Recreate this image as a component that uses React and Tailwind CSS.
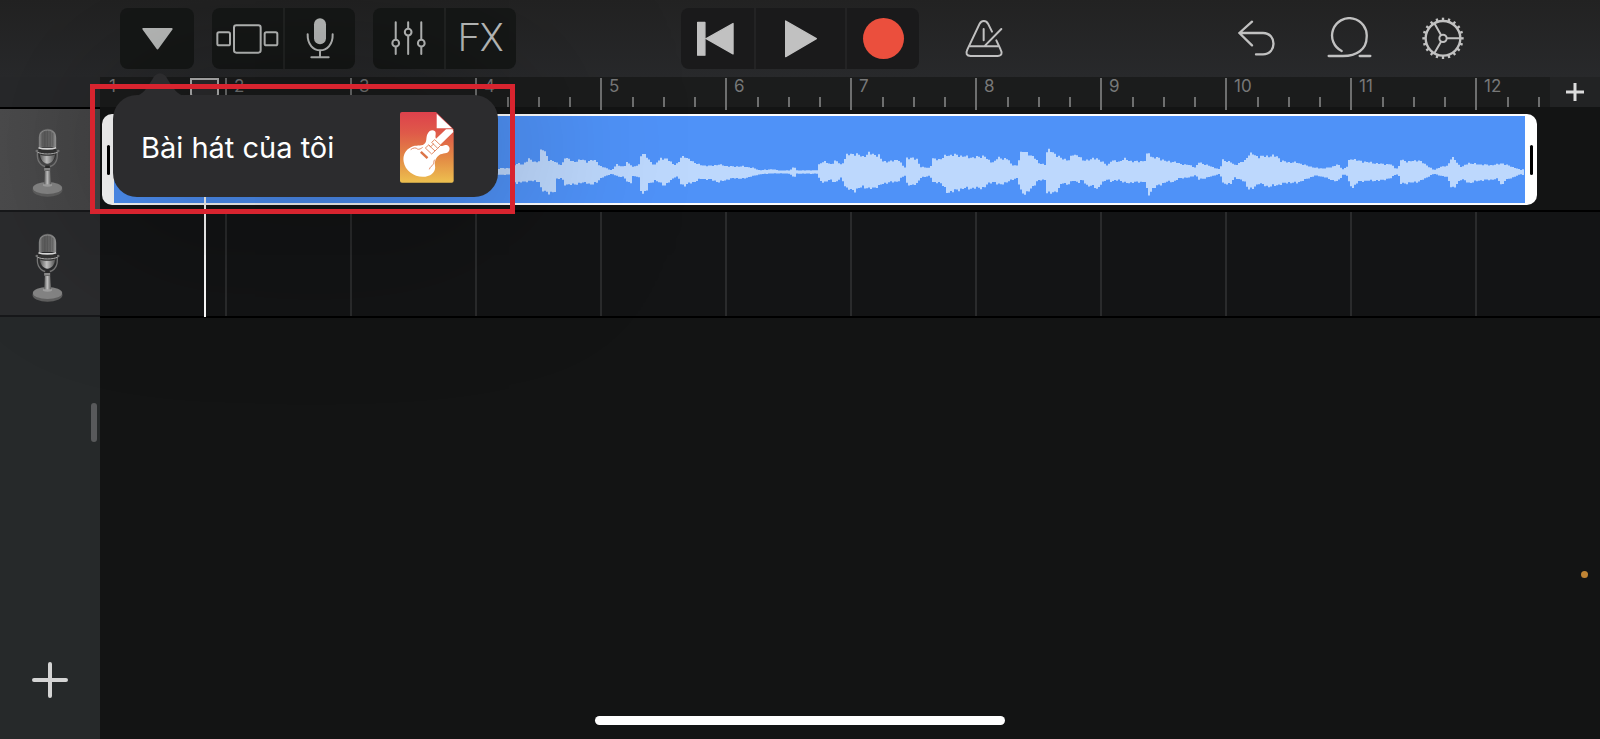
import React from "react";

const BARS = [1, 2, 3, 4, 5, 6, 7, 8, 9, 10, 11, 12];

/* Loudness envelope of the recording: [position, above, below] triples. */
const SEGMENTS = [
  {
    start: 398,
    unit: 2.958,
    points: [
      [0, 12, 8], [30, 10, 8], [45, 25, 35], [65, 22, 28], [82, 38, 28], [100, 30, 25], [113, 32, 30], [118, 60, 50],
      [124, 68, 55], [132, 60, 55], [140, 35, 62], [150, 32, 65], [160, 32, 55], [165, 28, 20], [182, 17, 18],
      [186, 44, 38], [200, 40, 36], [215, 28, 38], [235, 38, 32], [255, 30, 32], [268, 36, 38], [285, 30, 30],
      [292, 18, 20], [310, 12, 12], [328, 5, 5], [342, 22, 12], [365, 15, 15], [372, 28, 30], [385, 22, 30],
      [390, 15, 12], [408, 20, 15], [413, 50, 50], [420, 55, 62], [430, 46, 60], [437, 36, 35], [455, 20, 25],
      [472, 40, 32], [485, 40, 40], [500, 32, 28], [512, 22, 15], [525, 25, 15], [531, 42, 35], [543, 48, 40],
      [553, 38, 35], [570, 30, 30], [590, 20, 20], [620, 18, 22], [645, 22, 30], [670, 17, 22], [690, 16, 18],
      [715, 17, 20], [745, 12, 12], [765, 5, 7], [800, 8, 4], [830, 4, 4], [855, 5, 5], [868, 17, 18], [873, 5, 5],
      [935, 5, 5], [942, 25, 22], [955, 32, 32], [975, 22, 22], [990, 34, 32], [1008, 20, 15], [1015, 35, 35],
      [1022, 50, 50], [1048, 54, 55], [1070, 45, 42], [1088, 55, 50], [1120, 48, 42], [1127, 32, 35], [1150, 30, 30],
      [1175, 38, 28], [1187, 20, 15], [1197, 12, 10], [1200, 42, 32], [1215, 40, 42], [1232, 38, 32], [1240, 15, 18],
      [1270, 12, 10], [1277, 38, 32], [1300, 38, 30], [1320, 50, 60], [1345, 50, 55], [1370, 46, 48], [1400, 42, 48],
      [1430, 48, 46], [1440, 35, 35], [1458, 28, 28], [1470, 42, 38], [1500, 38, 30], [1510, 22, 22], [1530, 18, 18],
      [1534, 50, 50], [1536, 55, 55],
    ],
  },
  {
    start: 918,
    unit: 2.904,
    points: [
      [0, 55, 55], [10, 65, 62], [20, 50, 60], [45, 42, 30], [48, 25, 25], [70, 22, 22], [76, 64, 62], [90, 58, 62],
      [110, 45, 50], [118, 38, 32], [140, 35, 35], [150, 50, 25], [170, 48, 30], [178, 32, 22], [190, 35, 38],
      [212, 38, 42], [222, 40, 50], [232, 32, 35], [252, 18, 20], [262, 33, 28], [285, 30, 22], [300, 38, 32],
      [325, 30, 30], [360, 32, 28], [370, 60, 68], [380, 42, 50], [400, 40, 38], [425, 30, 28], [445, 30, 28],
      [460, 24, 18], [490, 20, 16], [508, 12, 8], [515, 28, 22], [535, 22, 18], [575, 8, 6], [580, 10, 6],
      [583, 36, 32], [610, 28, 35], [620, 20, 15], [650, 32, 28], [660, 50, 48], [672, 52, 50], [690, 44, 32],
      [715, 46, 42], [745, 46, 38], [755, 32, 35], [780, 28, 30], [800, 28, 32], [825, 20, 22], [855, 12, 10],
      [880, 10, 14], [900, 14, 22], [920, 22, 28], [935, 8, 8], [946, 14, 8], [955, 38, 38], [965, 38, 44],
      [980, 32, 28], [1010, 28, 25], [1040, 24, 25], [1075, 22, 18], [1085, 12, 8], [1097, 10, 6], [1100, 36, 34],
      [1125, 30, 32], [1155, 34, 28], [1175, 22, 18], [1200, 5, 5], [1215, 14, 10], [1240, 18, 15], [1247, 38, 40],
      [1257, 40, 50], [1270, 22, 28], [1280, 14, 20], [1300, 26, 32], [1330, 22, 25], [1365, 20, 22], [1385, 22, 20],
      [1397, 26, 40], [1405, 22, 25], [1430, 14, 15], [1455, 5, 5], [1463, 14, 14],
    ],
  },
];

const ENVELOPE = SEGMENTS.flatMap(({ start, unit, points }) =>
  points.map(([x, up, down]) => [start + x / unit, up / unit, down / unit])
).sort((a, b) => a[0] - b[0]);

function wavePath(middle) {
  const top = [];
  const bottom = [];
  let i = 0;
  const last = ENVELOPE[ENVELOPE.length - 1][0];
  for (let x = 398, n = 0; x < last; x += 2, n += 1) {
    while (i < ENVELOPE.length - 2 && ENVELOPE[i + 1][0] <= x) i += 1;
    const a = ENVELOPE[i];
    const b = ENVELOPE[i + 1];
    const t = (x - a[0]) / (b[0] - a[0] || 1);
    const up = a[1] + (b[1] - a[1]) * t;
    const down = a[2] + (b[2] - a[2]) * t;
    const noise = Math.sin(n * 2.3) * 0.07 + Math.sin(n * 5.1) * 0.04;
    top.push([x, middle - up * (1 + noise)]);
    bottom.push([x, middle + down * (1 - noise)]);
  }
  const forward = top.map(([x, y]) => `L${x} ${y.toFixed(1)}H${x + 2}`).join("");
  const back = bottom.reverse().map(([x, y]) => `L${x + 2} ${y.toFixed(1)}H${x}`).join("");
  return `M340 ${middle - 3}H398${forward}${back}L340 ${middle + 3}Z`;
}

function StudioMic({ id }) {
  return (
    <svg viewBox="95 85 95 207" className="h-[69px] w-8" aria-hidden="true">
      <defs>
        <linearGradient id={`${id}-head`}>
          <stop offset="0" stopColor="#8b8b8b" />
          <stop offset=".3" stopColor="#5b5b5b" />
          <stop offset=".7" stopColor="#6c6c6c" />
          <stop offset="1" stopColor="#9a9a9a" />
        </linearGradient>
        <linearGradient id={`${id}-metal`}>
          <stop offset="0" stopColor="#5a5a5a" />
          <stop offset=".45" stopColor="#c4c4c4" />
          <stop offset="1" stopColor="#565656" />
        </linearGradient>
      </defs>
      <ellipse cx="141" cy="271" rx="45" ry="20" fill="#5f5f5f" />
      <ellipse cx="141" cy="265" rx="44" ry="18" fill="#848484" />
      <ellipse cx="141" cy="256" rx="14" ry="5" fill="#a0a0a0" />
      <path d="M133 212h16l3 42h-21z" fill={`url(#${id}-metal)`} />
      <path d="M111 158c-3 24 8 42 30 44 22-2 32-20 29-44" fill="none" stroke="#777" strokeWidth="4" />
      <path d="M134 198h14v16h-14z" fill="#2b2b2b" />
      <path d="M131 205h18v8h-18z" fill="#8c8c8c" />
      <path d="M115 142v-28c0-36 52-36 52 0v28z" fill={`url(#${id}-head)`} />
      <path d="M125 100v40M133 95v46M141 93v48M149 95v46M157 100v40" stroke="#555" strokeWidth="2" />
      <path d="M119 104c6-17 38-17 44 0" fill="none" stroke="#8e8e8e" strokeWidth="3" />
      <path d="M114 145h53v14c0 42-53 42-53 0z" fill="#333" />
      <path d="M118 164c8 6 38 6 46 0-2 16-10 28-23 28s-21-12-23-28z" fill={`url(#${id}-metal)`} />
      <path d="M114 144c14 5 39 5 53 0" fill="none" stroke="#ddd" strokeWidth="5" />
      <path d="M110 157c14 8 48 8 62 0" fill="none" stroke="#b4b4b4" strokeWidth="3" />
      <circle cx="109" cy="154" r="4" fill="#777" />
      <circle cx="173" cy="154" r="4" fill="#777" />
    </svg>
  );
}

function SongFileIcon() {
  return (
    <svg viewBox="0 0 162 213" className="h-[71px] w-[54px]" aria-hidden="true">
      <defs>
        <linearGradient id="song-file" x1="0" y1="0" x2="0" y2="1">
          <stop offset="0" stopColor="#dd414c" />
          <stop offset=".3" stopColor="#df5a49" />
          <stop offset=".65" stopColor="#e38a45" />
          <stop offset="1" stopColor="#edc04f" />
        </linearGradient>
      </defs>
      <path d="M6 0H108L161 52V206Q161 212 155 212H6Q0 212 0 206V6Q0 0 6 0Z" fill="url(#song-file)" />
      <path d="M110 5V49H156Z" fill="#fff" />
      <path
        d="M158 52L138 52L108 80C104 74 110 64 105 58C98 51 86 56 82 67C77 79 82 90 72 97C62 104 48 98 34 105C16 113 8 130 11 149C15 177 46 198 76 194C98 190 108 175 105 161C103 148 108 136 118 129C127 123 144 127 148 115C152 102 139 96 129 101C124 103 121 103 120 99L160 60Z"
        fill="#fff"
      />
      <g fill="none" stroke="#dc7448" strokeWidth="2.5">
        <path d="M76 108l10-9 19 18-10 9zM95 91l9-8 18 17-9 9z" />
        <path d="M86 99l6 5 10-9M105 117l8-8" />
        <path d="M32 113c7-6 17-7 20-2 5 3 12-2 16-5" />
        <path d="M88 172c2-7 8-11 12-15 3-4 0-9 4-14" />
      </g>
      <path d="M60 122l5-5 20 19-5 5z" fill="#dc7448" />
    </svg>
  );
}

const groupButton = "flex h-full items-center justify-center";
const plainButton = "flex h-12 w-12 items-center justify-center";

function Toolbar() {
  return (
    <header className="grid h-[77px] shrink-0 grid-cols-[1fr_auto_1fr] items-center bg-linear-to-b from-[#222222] to-[#28292b]">
      <div className="flex h-[61px] gap-[18px] pl-[120px] text-[#bcbebd]">
        <button aria-label="Menu" className="flex w-[74px] items-center justify-center rounded-lg bg-[#161817]">
          <svg viewBox="415 82 98 70" className="h-6 w-[33px]" aria-hidden="true">
            <path d="M422 87H506L464 145Z" fill="currentColor" stroke="currentColor" strokeWidth="6" strokeLinejoin="round" />
          </svg>
        </button>
        <div className="flex w-[143px] divide-x-2 divide-[#222423] overflow-hidden rounded-lg bg-[#161817]">
          <button aria-label="Browser" className={`${groupButton} flex-1`}>
            <svg viewBox="636 70 190 90" className="h-[30px] w-16" fill="none" stroke="currentColor" strokeWidth="6" aria-hidden="true">
              <rect x="642" y="95" width="38" height="39" rx="5" />
              <rect x="692" y="74" width="80" height="82" rx="7" />
              <rect x="784" y="95" width="38" height="39" rx="5" />
            </svg>
          </button>
          <button aria-label="Audio recorder" className={`${groupButton} flex-1`}>
            <svg viewBox="900 51 96 130" className="h-11 w-8" fill="none" stroke="currentColor" strokeWidth="6" strokeLinecap="round" aria-hidden="true">
              <rect x="930" y="54" width="36" height="78" rx="18" fill="currentColor" stroke="none" />
              <path d="M911 102C909 166 988 166 986 102M948 150V170M922 171H974" />
            </svg>
          </button>
        </div>
        <div className="flex w-[143px] divide-x-2 divide-[#222423] overflow-hidden rounded-lg bg-[#161817]">
          <button aria-label="Track controls" className={`${groupButton} flex-1`}>
            <svg viewBox="1152 61 110 110" className="h-[37px] w-[37px]" stroke="currentColor" strokeWidth="6" strokeLinecap="round" aria-hidden="true">
              <path d="M1169 68V162M1206 68V162M1245 68V162" />
              <g fill="#161817">
                <circle cx="1169" cy="130" r="10" />
                <circle cx="1206" cy="97" r="10" />
                <circle cx="1245" cy="130" r="10" />
              </g>
            </svg>
          </button>
          <button className={`${groupButton} flex-1 font-[Roboto,sans-serif] text-[39px] leading-none font-light`}>FX</button>
        </div>
      </div>

      <div className="flex h-[61px] divide-x-2 divide-[#232324] overflow-hidden rounded-lg bg-[#1a1a1b] text-[#c1c1c1]">
        <button aria-label="Go to beginning" className={`${groupButton} w-[75px]`}>
          <svg viewBox="109 56 130 120" className="h-10 w-[43px]" fill="currentColor" stroke="currentColor" strokeWidth="4" strokeLinejoin="round" aria-hidden="true">
            <path d="M114 66H136V165H114ZM221 69V161L140 115Z" />
          </svg>
        </button>
        <button aria-label="Play" className={`${groupButton} w-[91px]`}>
          <svg viewBox="365 56 114 120" className="h-10 w-[38px]" fill="currentColor" stroke="currentColor" strokeWidth="4" strokeLinejoin="round" aria-hidden="true">
            <path d="M376 62L468 115L376 169Z" />
          </svg>
        </button>
        <button aria-label="Record" className={`${groupButton} w-[72px]`}>
          <span className="h-[41px] w-[41px] rounded-full bg-[#eb4f3d]" />
        </button>
      </div>

      <div className="flex items-center gap-[45px] pr-[133px] pl-[41px] text-[#c1c1c1]">
        <button aria-label="Metronome" className={`${plainButton} mr-auto`}>
          <svg viewBox="912 56 120 120" className="h-10 w-10" fill="none" stroke="currentColor" strokeWidth="6" strokeLinecap="round" strokeLinejoin="round" aria-hidden="true">
            <path d="M996 94L984 70C978 59 965 59 959 70L922 148C916 160 920 167 932 167H1012C1025 167 1028 158 1022 148L1009 120" />
            <path d="M930 138H1014M971 86V120M1024 86L975 136" />
          </svg>
        </button>
        <button aria-label="Undo" className={plainButton}>
          <svg viewBox="112 57 120 120" className="h-10 w-10" fill="none" stroke="currentColor" strokeWidth="7" strokeLinecap="round" strokeLinejoin="round" aria-hidden="true">
            <path d="M157 65L119 99L157 136M119 99H190C232 99 232 163 190 163H169" />
          </svg>
        </button>
        <button aria-label="Loop browser" className={plainButton}>
          <svg viewBox="382 52 138 132" className="h-11 w-[46px]" fill="none" stroke="currentColor" strokeWidth="7" strokeLinecap="round" aria-hidden="true">
            <path d="M426 154A52 52 0 1 1 501 112C501 150 470 169 430 169H387M480 169H512" />
          </svg>
        </button>
        <button aria-label="Settings" className={plainButton}>
          <svg viewBox="662 51 132 132" className="h-11 w-11" fill="none" stroke="currentColor" strokeWidth="7" aria-hidden="true">
            <circle cx="728" cy="115" r="52" />
            <circle cx="728" cy="115" r="11" strokeWidth="6" />
            <path d="M739 115H780M722 105L702 70M722 125L702 160" strokeWidth="6" />
            {Array.from({ length: 20 }, (_, i) => (
              <path key={i} d="M780 115H790" transform={`rotate(${i * 18} 728 115)`} />
            ))}
          </svg>
        </button>
      </div>
    </header>
  );
}

function Ruler() {
  return (
    <div className="flex h-[30px] shrink-0 bg-[#1b1c1c]">
      <div className="flex min-w-0 flex-1 overflow-x-clip">
        {BARS.map((bar) => (
          <div key={bar} className="flex h-[33px] w-[125px] shrink-0 items-start pt-px">
            <span className={bar === 1 ? "h-8 w-0.5 shrink-0" : "h-8 w-0.5 shrink-0 bg-[#6e6f6f]"} />
            <span className="w-7 pl-[7px] text-[17px] leading-[17px] text-[#777878]">{bar}</span>
            <div className="flex gap-[29px] pt-[19px] pl-0.5">
              <span className="h-2.5 w-0.5 bg-[#6e6f6f]" />
              <span className="h-2.5 w-0.5 bg-[#6e6f6f]" />
              <span className="h-2.5 w-0.5 bg-[#6e6f6f]" />
            </div>
          </div>
        ))}
      </div>
      <button aria-label="Add section" className="flex w-[50px] items-center justify-center bg-[#222324]">
        <svg viewBox="0 0 18 18" className="h-[18px] w-[18px]" stroke="#dcdcdc" strokeWidth="3" aria-hidden="true">
          <path d="M9 0V18M0 9H18" />
        </svg>
      </button>
    </div>
  );
}

function AudioRegion() {
  return (
    <div className="flex h-[91px] w-[1435px] overflow-hidden rounded-[10px] bg-white py-0.5">
      <div className="flex w-3 shrink-0 items-center justify-center">
        <span className="h-[30px] w-[3px] rounded-full bg-black" />
      </div>
      <svg viewBox="12 2 1411 87" preserveAspectRatio="none" className="h-full min-w-0 flex-1 bg-[#4f92f8]" aria-hidden="true">
        <path d={wavePath(58)} fill="#bdd8fd" />
      </svg>
      <div className="flex w-3 shrink-0 items-center justify-center">
        <span className="h-[30px] w-[3px] rounded-full bg-black" />
      </div>
    </div>
  );
}

function SongMenu() {
  return (
    <div className="absolute top-[84px] left-[90px] flex pt-[11px] pr-[17px] pb-[17px] pl-[23px]">
      <div className="relative rounded-3xl bg-[#2c2c2e] shadow-[0_0_180px_10px_rgba(0,0,0,0.4)]">
        <svg viewBox="0 0 50 24" className="absolute -top-[23px] left-[22px] h-6 w-[50px]" aria-hidden="true">
          <path d="M0 24C8 23 11 17 17 8C21 -1 29 -1 33 8C39 17 42 23 50 24Z" fill="#2c2c2e" />
        </svg>
        <button className="flex h-[102px] w-[385px] items-center justify-between pt-0.5 pr-11 pl-7 text-[29px] text-white">
          <span className="pt-0.5">Bài hát của tôi</span>
          <SongFileIcon />
        </button>
      </div>
      <span className="pointer-events-none absolute inset-0 border-5 border-[#d8242f]" />
    </div>
  );
}

export default function App() {
  return (
    <div className="relative flex min-h-screen flex-col overflow-hidden bg-[#131414] font-[Inter,sans-serif]">
      <Toolbar />
      <div className="flex flex-1">
        <aside className="relative flex w-[100px] shrink-0 flex-col bg-[#26292a]">
          <div className="h-8 border-b-2 border-black bg-[#27282a]" />
          <button aria-label="Audio recorder track 1" className="flex h-[101px] items-center justify-center bg-linear-to-r from-[#4b4b4c] to-[#454546] pt-1.5 pr-1">
            <StudioMic id="mic-one" />
          </button>
          <button aria-label="Audio recorder track 2" className="flex h-[107px] items-center justify-center border-y-2 border-[#17181a] bg-[#2a2b2d] pt-2 pr-1">
            <StudioMic id="mic-two" />
          </button>
          <div className="flex flex-1 flex-col justify-end">
            <button aria-label="Add track" className="flex h-12 items-center justify-center">
              <svg viewBox="0 0 36 36" className="h-9 w-9" stroke="#d4d4d4" strokeWidth="4" strokeLinecap="round" aria-hidden="true">
                <path d="M18 2V34M2 18H34" />
              </svg>
            </button>
            <div className="h-[35px]" />
          </div>
          <span className="absolute top-[326px] right-[3px] h-[39px] w-1.5 rounded-full bg-[#58595b]" />
        </aside>

        <main className="relative min-w-0 flex-1">
          <Ruler />
          <div className="h-[105px] overflow-hidden border-b-2 border-black pt-[7px] pl-0.5">
            <AudioRegion />
          </div>
          <div className="flex h-[106px] overflow-hidden border-b-2 border-black bg-[#131415] pl-0.5">
            {BARS.map((bar) => (
              <div key={bar} className="h-full w-[125px] shrink-0 border-r-2 border-[#2a2b2c]" />
            ))}
          </div>
          <div className="absolute top-px left-[90px] flex flex-col items-center">
            <span className="h-5 w-[29px] rounded-b-sm border-2 border-[#b5b5b5] bg-[#2c2c2e]" />
            <span className="h-[219px] w-0.5 bg-white" />
          </div>
        </main>
      </div>

      <SongMenu />
      <span className="absolute top-[571px] right-3 h-[7px] w-[7px] rounded-full bg-[#c08434]" />
      <span className="absolute bottom-3.5 left-1/2 h-[9px] w-[410px] -translate-x-1/2 rounded-full bg-white" />
    </div>
  );
}
